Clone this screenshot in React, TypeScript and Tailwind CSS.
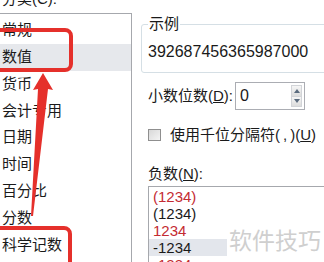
const categories = ["常规", "数值", "货币", "会计专用", "日期", "时间", "百分比", "分数", "科学记数"];

const negatives = [
  { text: "(1234)", red: true },
  { text: "(1234)", red: false },
  { text: "1234", red: true },
  { text: "-1234", red: false, selected: true },
  { text: "-1234", red: true },
];

function Annotations() {
  return (
    <svg
      className="absolute inset-0 pointer-events-none"
      width="324"
      height="262"
      viewBox="0 0 324 262"
    >
      <rect x="-20" y="30" width="91" height="40" rx="6" fill="none" stroke="#e5302b" strokeWidth="4" />
      <rect x="-20" y="228" width="90" height="60" rx="6" fill="none" stroke="#e5302b" strokeWidth="4" />
      <polygon
        points="43,73 53,90 48,89 33,216 31,216 38,89 33,90"
        fill="#e5302b"
      />
    </svg>
  );
}

export default function App() {
  return (
    <div
      className="relative w-[324px] h-[262px] overflow-hidden bg-white text-[#1a1a1a] flex"
      style={{ fontFamily: '"Liberation Sans", "Noto Sans CJK SC", sans-serif' }}
    >
      {/* category list */}
      <div className="w-[132px] shrink-0 flex flex-col">
        <div className="h-[13px] shrink-0 overflow-hidden flex items-end pl-[2px]">
          <span className="text-[15px] leading-[20px] mb-[4px]">分类(C):</span>
        </div>
        <div className="flex-1 min-h-0 border-t border-r border-[#a6a8ad] pt-[3px]">
          {categories.map((c) => (
            <div
              key={c}
              className={`h-[26.8px] flex items-center pl-[2px] text-[15px] ${c === "数值" ? "bg-[#e6e8ec]" : ""}`}
            >
              {c}
            </div>
          ))}
        </div>
      </div>

      {/* options */}
      <div className="flex-1 min-w-0 flex flex-col">
        <div className="relative shrink-0 mt-[24px] ml-[9px] -mr-[10px] h-[49px] border border-[#d5dfe5] rounded-[3px]">
          <span className="absolute -top-[11px] left-[6px] bg-white px-[1px] text-[15px] leading-[20px]">示例</span>
          <div className="pl-[6px] pt-[17px] text-[16px] leading-[20px]">392687456365987000</div>
        </div>

        <div className="shrink-0 mt-[9px] ml-[16px] flex items-center">
          <span className="w-[87px] text-[15px] leading-[20px] whitespace-nowrap">
            小数位数(<span className="underline">D</span>):
          </span>
          <div className="relative w-[70px] h-[28px] border border-[#abadb3] flex items-center pl-[4px] text-[16px]">
            0
            <div className="absolute right-[2px] top-[2px] w-[11px] h-[22px] flex flex-col border border-[#d2d4d8]">
              <div className="flex-1 bg-gradient-to-b from-[#f6f6f6] to-[#dcdcdc] flex items-center justify-center">
                <div className="w-0 h-0 border-l-[3px] border-r-[3px] border-b-[4px] border-l-transparent border-r-transparent border-b-[#5a6b7e]" />
              </div>
              <div className="flex-1 bg-gradient-to-b from-[#f6f6f6] to-[#dcdcdc] flex items-center justify-center border-t border-[#d2d4d8]">
                <div className="w-0 h-0 border-l-[3px] border-r-[3px] border-t-[4px] border-l-transparent border-r-transparent border-t-[#5a6b7e]" />
              </div>
            </div>
          </div>
        </div>

        <div className="shrink-0 mt-[15px] ml-[16px] h-[20px] flex items-center gap-[9px]">
          <div className="w-[13px] h-[12px] border border-[#8f8f8f] bg-gradient-to-br from-[#d8d8d8] to-[#f4f4f4]" />
          <span className="text-[15px] leading-[20px] whitespace-nowrap">
            使用千位分隔符(&thinsp;,&thinsp;)(<span className="underline">U</span>)
          </span>
        </div>

        <div className="shrink-0 mt-[19px] ml-[16px] text-[15px] leading-[20px]">
          负数(<span className="underline">N</span>):
        </div>

        <div className="shrink-0 mt-[2px] ml-[16px] h-[120px] border-t border-l border-[#a6a8ad] pt-[1px]">
          {negatives.map((n, i) => (
            <div
              key={i}
              className={`w-[78px] pl-[4px] text-[15px] leading-[17px] ${n.red ? "text-[#c42b32]" : ""} ${n.selected ? "bg-[#e3e6ec]" : ""}`}
            >
              {n.text}
            </div>
          ))}
        </div>
      </div>

      {/* watermark */}
      <div className="absolute left-[229px] top-[226px] text-[23px] leading-[30px] text-[#cfcfcf] whitespace-nowrap">
        软件技巧
      </div>

      <Annotations />
    </div>
  );
}
